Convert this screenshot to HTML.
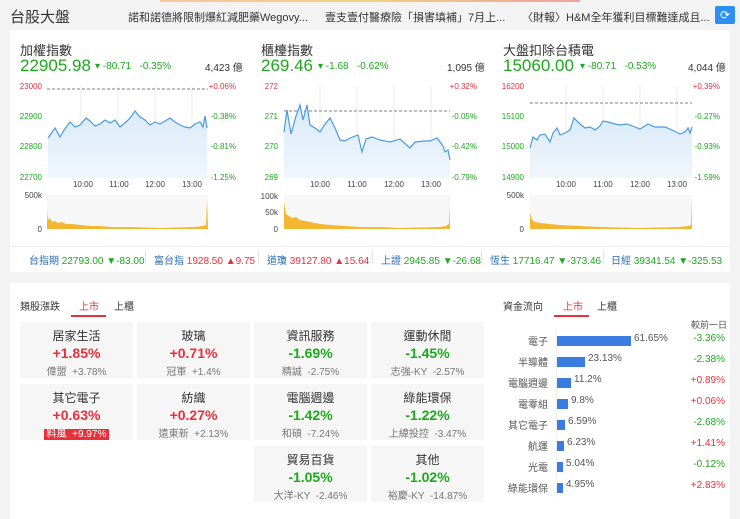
<!DOCTYPE html>
<html><head><meta charset="utf-8"><style>
*{margin:0;padding:0;box-sizing:border-box}
body{width:740px;height:519px;background:#f3f3f3;font-family:"Liberation Sans","Noto Sans CJK TC",sans-serif;position:relative;overflow:hidden;color:#333}
.a{position:absolute;white-space:nowrap}
.g{color:#1ea81e}.r{color:#e5323c}.b{color:#2a6bb5}
.card{position:absolute;background:#fff}
.tile{position:absolute;width:113px;height:56px;background:#f6f6f6;text-align:center}
.tile .n{font-size:12px;color:#333;margin-top:5px}
.tile .p{font-size:14px;font-weight:bold;margin-top:1px}
.tile .s{font-size:10px;color:#777;margin-top:2px}
.lbl{font-size:10px;color:#555;text-align:right;width:60px}
</style></head><body>
<div class="a" style="left:160px;top:0;width:420px;height:2px;background:linear-gradient(90deg,#f4c6a0,#f0d080,#f0a0a0)"></div>
<div class="a" style="left:10px;top:6px;font-size:15px;color:#333">台股大盤</div>
<div class="a" style="left:128px;top:9px;font-size:11px;color:#333">諾和諾德將限制爆紅減肥藥Wegovy...</div>
<div class="a" style="left:325px;top:9px;font-size:11px;color:#333">壹支壹付醫療險「損害填補」7月上...</div>
<div class="a" style="left:522px;top:9px;font-size:11px;color:#333">〈財報〉H&amp;M全年獲利目標難達成且...</div>
<div class="a" style="left:715px;top:6px;width:20px;height:18px;background:#2d8ff0;border-radius:2px;color:#fff;font-size:12px;text-align:center;line-height:18px">⟳</div>

<div class="card" style="left:10px;top:30px;width:720px;height:242px"></div>
<div class="a" style="left:10px;top:246px;width:720px;height:1px;background:#eee"></div>

<div class="a" style="left:20px;top:40px;font-size:13px">加權指數</div>
<div class="a g" style="left:20px;top:56px;font-size:17px">22905.98</div>
<div class="a g" style="left:95px;top:61px;font-size:10px">▾ -80.71 &nbsp; -0.35%</div>
<div class="a" style="left:205px;top:59px;font-size:10px">4,423 億</div>

<div class="a" style="left:261px;top:40px;font-size:13px">櫃檯指數</div>
<div class="a g" style="left:261px;top:56px;font-size:17px">269.46</div>
<div class="a g" style="left:318px;top:61px;font-size:10px">▾ -1.68 &nbsp; -0.62%</div>
<div class="a" style="left:447px;top:59px;font-size:10px">1,095 億</div>

<div class="a" style="left:503px;top:40px;font-size:13px">大盤扣除台積電</div>
<div class="a g" style="left:503px;top:56px;font-size:17px">15060.00</div>
<div class="a g" style="left:580px;top:61px;font-size:10px">▾ -80.71 &nbsp; -0.53%</div>
<div class="a" style="left:688px;top:59px;font-size:10px">4,044 億</div>

<svg class="a" style="left:0;top:0" width="740" height="250" font-family="Liberation Sans" font-size="8">
<defs><linearGradient id="fl" x1="0" y1="0" x2="0" y2="1"><stop offset="0" stop-color="#dbeaf9"/><stop offset="1" stop-color="#f0f6fc"/></linearGradient></defs>
<g stroke="#eee" stroke-width="1">
<line x1="81" y1="86" x2="81" y2="178"/><line x1="118" y1="86" x2="118" y2="178"/><line x1="155" y1="86" x2="155" y2="178"/><line x1="192" y1="86" x2="192" y2="178"/>
<line x1="320" y1="86" x2="320" y2="178"/><line x1="357" y1="86" x2="357" y2="178"/><line x1="394" y1="86" x2="394" y2="178"/><line x1="431" y1="86" x2="431" y2="178"/>
<line x1="566" y1="86" x2="566" y2="178"/><line x1="603" y1="86" x2="603" y2="178"/><line x1="640" y1="86" x2="640" y2="178"/><line x1="677" y1="86" x2="677" y2="178"/>
<line x1="47" y1="177" x2="208" y2="177"/><line x1="284" y1="177" x2="450" y2="177"/><line x1="530" y1="177" x2="692" y2="177"/>
</g>
<rect x="47" y="195" width="161" height="34" fill="#f7f7f7"/><rect x="284" y="195" width="166" height="34" fill="#f7f7f7"/><rect x="530" y="195" width="162" height="34" fill="#f7f7f7"/>
<g stroke="#555" stroke-dasharray="3,2" stroke-width="0.8"><line x1="47" y1="89" x2="208" y2="89"/><line x1="284" y1="111" x2="450" y2="111"/><line x1="530" y1="103" x2="692" y2="103"/></g>
<path d="M48,138 55,128 60,137 64,130 70,122 75,127 80,125 86,118 90,121 95,126 100,124 105,120 110,123 115,120 120,127 126,122 130,118 135,111 140,117 145,120 150,125 155,122 160,124 165,121 170,118 175,122 180,125 185,127 190,128 195,124 200,122 203,127 205,116 207,128 207,177 48,177Z" fill="url(#fl)" stroke="none"/>
<polyline points="48,138 55,128 60,137 64,130 70,122 75,127 80,125 86,118 90,121 95,126 100,124 105,120 110,123 115,120 120,127 126,122 130,118 135,111 140,117 145,120 150,125 155,122 160,124 165,121 170,118 175,122 180,125 185,127 190,128 195,124 200,122 203,127 205,116 207,128" fill="none" stroke="#4a9be0" stroke-width="1.2"/>
<path d="M284,132 287,110 291,134 296,116 300,105 303,120 307,105 310,125 315,128 320,132 325,124 330,118 335,128 340,140 345,141 350,138 358,135 362,152 366,139 372,137 380,140 390,142 400,139 410,148 415,142 425,141 430,141 437,138 443,146 445,152 448,150 450,160 450,177 284,177Z" fill="url(#fl)"/>
<polyline points="284,132 287,110 291,134 296,116 300,105 303,120 307,105 310,125 315,128 320,132 325,124 330,118 335,128 340,140 345,141 350,138 358,135 362,152 366,139 372,137 380,140 390,142 400,139 410,148 415,142 425,141 430,141 437,138 443,146 445,152 448,150 450,160" fill="none" stroke="#4a9be0" stroke-width="1.2"/>
<path d="M530,148 533,137 537,140 540,135 545,134 550,142 553,133 557,128 560,135 565,133 570,130 574,118 580,124 585,128 590,127 595,130 600,126 603,121 608,122 615,124 620,125 627,124 635,127 640,129 648,124 655,127 665,127 672,130 680,134 685,132 688,128 690,133 692,127 692,177 530,177Z" fill="url(#fl)"/>
<polyline points="530,148 533,137 537,140 540,135 545,134 550,142 553,133 557,128 560,135 565,133 570,130 574,118 580,124 585,128 590,127 595,130 600,126 603,121 608,122 615,124 620,125 627,124 635,127 640,129 648,124 655,127 665,127 672,130 680,134 685,132 688,128 690,133 692,127" fill="none" stroke="#4a9be0" stroke-width="1.2"/>
<g fill="#f5b631">
<path d="M47,229 47,211 48,220 50,218 52,222 55,221 58,223 62,222 66,224 72,224 80,225 90,226 100,226 110,227 130,227 160,228 195,227 203,226 206,225 207,199 208,229Z"/>
<path d="M284,229 284,202 286,214 289,216 292,218 296,217 300,220 305,221 310,222 320,224 330,225 345,226 360,227 380,227 400,228 440,227 446,226 449,224 450,205 450,229Z"/>
<path d="M530,229 530,213 532,220 535,222 540,223 550,224 560,225 580,226 600,227 640,228 680,227 688,226 691,225 692,199 692,229Z"/>
</g>
<g fill="#e5323c" text-anchor="end"><text x="42" y="89">23000</text><text x="278" y="89">272</text><text x="524" y="89">16200</text>
<text x="236" y="89">+0.06%</text><text x="477" y="89">+0.32%</text><text x="720" y="89">+0.39%</text></g>
<g fill="#1ea81e" text-anchor="end"><text x="42" y="119">22900</text><text x="42" y="149">22800</text><text x="42" y="180">22700</text>
<text x="236" y="119">-0.38%</text><text x="236" y="149">-0.81%</text><text x="236" y="180">-1.25%</text>
<text x="278" y="119">271</text><text x="278" y="149">270</text><text x="278" y="180">269</text>
<text x="477" y="119">-0.05%</text><text x="477" y="149">-0.42%</text><text x="477" y="180">-0.79%</text>
<text x="524" y="119">15100</text><text x="524" y="149">15000</text><text x="524" y="180">14900</text>
<text x="720" y="119">-0.27%</text><text x="720" y="149">-0.93%</text><text x="720" y="180">-1.59%</text></g>
<g fill="#444" text-anchor="middle"><text x="83" y="187">10:00</text><text x="119" y="187">11:00</text><text x="155" y="187">12:00</text><text x="192" y="187">13:00</text>
<text x="320" y="187">10:00</text><text x="357" y="187">11:00</text><text x="394" y="187">12:00</text><text x="431" y="187">13:00</text>
<text x="566" y="187">10:00</text><text x="603" y="187">11:00</text><text x="640" y="187">12:00</text><text x="677" y="187">13:00</text></g>
<g fill="#444" text-anchor="end"><text x="42" y="198">500k</text><text x="42" y="232">0</text><text x="278" y="199">100k</text><text x="278" y="215">50k</text><text x="278" y="232">0</text><text x="524" y="198">500k</text><text x="524" y="232">0</text></g>
</svg>

<div class="a" style="left:29px;top:252px;font-size:10px"><span class="b">台指期</span> <span class="g">22793.00 ▼-83.00</span></div>
<div class="a" style="left:145px;top:250px;width:1px;height:14px;background:#e5e5e5"></div>
<div class="a" style="left:154px;top:252px;font-size:10px"><span class="b">富台指</span> <span class="r">1928.50 ▲9.75</span></div>
<div class="a" style="left:258px;top:250px;width:1px;height:14px;background:#e5e5e5"></div>
<div class="a" style="left:267px;top:252px;font-size:10px"><span class="b">道瓊</span> <span class="r">39127.80 ▲15.64</span></div>
<div class="a" style="left:372px;top:250px;width:1px;height:14px;background:#e5e5e5"></div>
<div class="a" style="left:381px;top:252px;font-size:10px"><span class="b">上證</span> <span class="g">2945.85 ▼-26.68</span></div>
<div class="a" style="left:481px;top:250px;width:1px;height:14px;background:#e5e5e5"></div>
<div class="a" style="left:490px;top:252px;font-size:10px"><span class="b">恆生</span> <span class="g">17716.47 ▼-373.46</span></div>
<div class="a" style="left:603px;top:250px;width:1px;height:14px;background:#e5e5e5"></div>
<div class="a" style="left:611px;top:252px;font-size:10px"><span class="b">日經</span> <span class="g">39341.54 ▼-325.53</span></div>

<div class="card" style="left:10px;top:283px;width:720px;height:236px"></div>
<div class="a" style="left:20px;top:298px;font-size:10px">類股漲跌</div>
<div class="a r" style="left:79px;top:298px;font-size:10px">上市</div>
<div class="a" style="left:71px;top:315px;width:35px;height:2px;background:#e5323c"></div>
<div class="a" style="left:114px;top:298px;font-size:10px">上櫃</div>

<div class="tile" style="left:20px;top:322px"><div class="n">居家生活</div><div class="p r">+1.85%</div><div class="s">偉盟 &nbsp;+3.78%</div></div>
<div class="tile" style="left:137px;top:322px"><div class="n">玻璃</div><div class="p r">+0.71%</div><div class="s">冠軍 &nbsp;+1.4%</div></div>
<div class="tile" style="left:254px;top:322px"><div class="n">資訊服務</div><div class="p g">-1.69%</div><div class="s">精誠 &nbsp;-2.75%</div></div>
<div class="tile" style="left:371px;top:322px"><div class="n">運動休閒</div><div class="p g">-1.45%</div><div class="s">志強-KY &nbsp;-2.57%</div></div>
<div class="tile" style="left:20px;top:384px"><div class="n">其它電子</div><div class="p r">+0.63%</div><div class="s"><span style="background:#e5323c;color:#fff;padding:0 3px">料風 &nbsp;+9.97%</span></div></div>
<div class="tile" style="left:137px;top:384px"><div class="n">紡織</div><div class="p r">+0.27%</div><div class="s">遠東新 &nbsp;+2.13%</div></div>
<div class="tile" style="left:254px;top:384px"><div class="n">電腦週邊</div><div class="p g">-1.42%</div><div class="s">和碩 &nbsp;-7.24%</div></div>
<div class="tile" style="left:371px;top:384px"><div class="n">綠能環保</div><div class="p g">-1.22%</div><div class="s">上緯投控 &nbsp;-3.47%</div></div>
<div class="tile" style="left:254px;top:446px"><div class="n">貿易百貨</div><div class="p g">-1.05%</div><div class="s">大洋-KY &nbsp;-2.46%</div></div>
<div class="tile" style="left:371px;top:446px"><div class="n">其他</div><div class="p g">-1.02%</div><div class="s">裕慶-KY &nbsp;-14.87%</div></div>

<div class="a" style="left:503px;top:298px;font-size:10px">資金流向</div>
<div class="a r" style="left:563px;top:298px;font-size:10px">上市</div>
<div class="a" style="left:554px;top:315px;width:35px;height:2px;background:#e5323c"></div>
<div class="a" style="left:597px;top:298px;font-size:10px">上櫃</div>
<div class="a" style="left:691px;top:318px;font-size:9px;color:#555">較前一日</div>
<div class="a" style="left:556px;top:330px;width:1px;height:168px;background:#eee"></div>

<div class="a lbl" style="left:488px;top:333px">電子</div><div class="a" style="left:557px;top:336px;width:74px;height:10px;background:#3a7de0"></div><div class="a" style="left:634px;top:333px;font-size:10px;color:#555">61.65%</div><div class="a g" style="left:665px;top:333px;font-size:10px;width:60px;text-align:right">-3.36%</div>
<div class="a lbl" style="left:488px;top:354px">半導體</div><div class="a" style="left:557px;top:357px;width:28px;height:10px;background:#3a7de0"></div><div class="a" style="left:588px;top:353px;font-size:10px;color:#555">23.13%</div><div class="a g" style="left:665px;top:354px;font-size:10px;width:60px;text-align:right">-2.38%</div>
<div class="a lbl" style="left:488px;top:375px">電腦週邊</div><div class="a" style="left:557px;top:378px;width:14px;height:10px;background:#3a7de0"></div><div class="a" style="left:574px;top:374px;font-size:10px;color:#555">11.2%</div><div class="a r" style="left:665px;top:375px;font-size:10px;width:60px;text-align:right">+0.89%</div>
<div class="a lbl" style="left:488px;top:396px">電零組</div><div class="a" style="left:557px;top:399px;width:11px;height:10px;background:#3a7de0"></div><div class="a" style="left:571px;top:395px;font-size:10px;color:#555">9.8%</div><div class="a r" style="left:665px;top:396px;font-size:10px;width:60px;text-align:right">+0.06%</div>
<div class="a lbl" style="left:488px;top:417px">其它電子</div><div class="a" style="left:557px;top:420px;width:8px;height:10px;background:#3a7de0"></div><div class="a" style="left:568px;top:416px;font-size:10px;color:#555">6.59%</div><div class="a g" style="left:665px;top:417px;font-size:10px;width:60px;text-align:right">-2.68%</div>
<div class="a lbl" style="left:488px;top:438px">航運</div><div class="a" style="left:557px;top:441px;width:7px;height:10px;background:#3a7de0"></div><div class="a" style="left:567px;top:437px;font-size:10px;color:#555">6.23%</div><div class="a r" style="left:665px;top:438px;font-size:10px;width:60px;text-align:right">+1.41%</div>
<div class="a lbl" style="left:488px;top:459px">光電</div><div class="a" style="left:557px;top:462px;width:6px;height:10px;background:#3a7de0"></div><div class="a" style="left:566px;top:458px;font-size:10px;color:#555">5.04%</div><div class="a g" style="left:665px;top:459px;font-size:10px;width:60px;text-align:right">-0.12%</div>
<div class="a lbl" style="left:488px;top:480px">綠能環保</div><div class="a" style="left:557px;top:483px;width:6px;height:10px;background:#3a7de0"></div><div class="a" style="left:566px;top:479px;font-size:10px;color:#555">4.95%</div><div class="a r" style="left:665px;top:480px;font-size:10px;width:60px;text-align:right">+2.83%</div>
</body></html>
